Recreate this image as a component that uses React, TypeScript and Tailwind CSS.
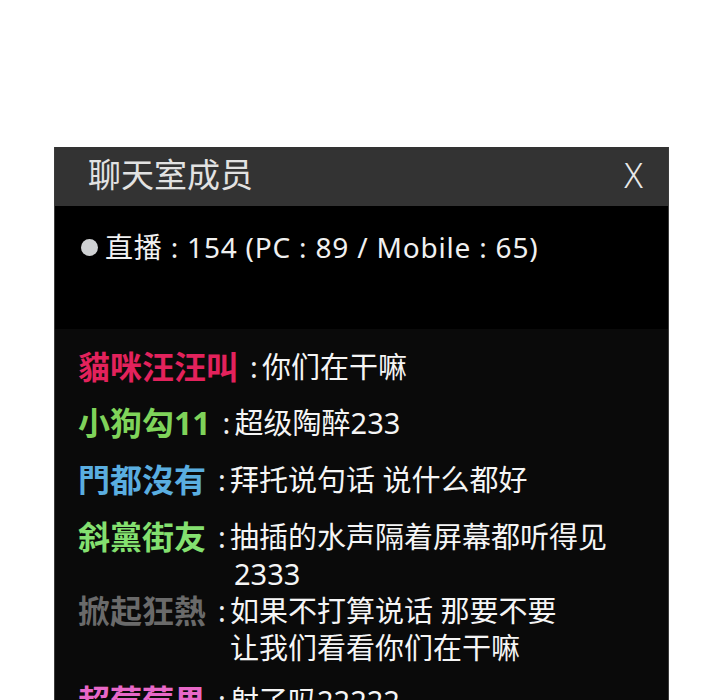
import { ReactNode } from 'react'

// 聊天室成员面板

interface ChatLine {
  name: string
  color: string
  gap: string
  text: ReactNode
}

const lines: ChatLine[] = [
  { name: '貓咪汪汪叫', color: 'text-[#e3225c]', gap: 'mb-[19px]', text: '你们在干嘛' },
  { name: '小狗勾11', color: 'text-[#7fd35a]', gap: 'mb-[20px]', text: '超级陶醉233' },
  { name: '門都沒有', color: 'text-[#5aaee0]', gap: 'mb-[20px]', text: '拜托说句话 说什么都好' },
  {
    name: '斜黨街友',
    color: 'text-[#84e070]',
    gap: 'mb-0',
    text: (
      <>
        抽插的水声隔着屏幕都听得见
        <br />
        <span className="pl-[4px]">2333</span>
      </>
    )
  },
  {
    name: '掀起狂熱',
    color: 'text-[#6a6a6a]',
    gap: 'mb-[16px]',
    text: (
      <>
        如果不打算说话 那要不要
        <br />
        让我们看看你们在干嘛
      </>
    )
  },
  { name: '超莓莓果', color: 'text-[#e868c8]', gap: 'mb-0', text: '射了吗22222' }
]

export default function App() {
  return (
    <div
      className="h-[700px] overflow-hidden bg-white pt-[147px]"
      style={{ fontFamily: '"Noto Sans", "Noto Sans CJK SC", sans-serif' }}
    >
      <div className="ml-[54px] w-[615px] h-[553px] border-x border-[#3c3c3c] bg-black overflow-hidden">
        {/* 标题栏 */}
        <div className="h-[59px] bg-[#333333] flex items-center justify-between pl-[33px] pr-[25px]">
          <span className="text-[33px] leading-none text-[#e2e2e2] -mt-[4px]">聊天室成员</span>
          <span className="text-[34px] leading-none font-light text-[#e8e8e8] -mt-[4px]">X</span>
        </div>

        {/* 在线人数 */}
        <div className="pt-[23px] pl-[26px] flex items-center h-[60px]">
          <span className="w-[17px] h-[17px] rounded-full bg-[#cfd1d3] mr-[7px]" />
          <span className="text-[28px] leading-[37px] tracking-[0.8px] text-[#f0f0f0] whitespace-nowrap">
            直播 : 154 (PC : 89 / Mobile : 65)
          </span>
        </div>

        {/* 聊天记录 */}
        <div className="mt-[63px] bg-[#0a0a0a] h-full pl-[23px] pt-[19px] flex flex-col">
          {lines.map((line) => (
            <div key={line.name} className={`flex items-start ${line.gap}`}>
              <span className={`text-[32px] leading-[37px] font-bold whitespace-nowrap ${line.color}`}>
                {line.name}
              </span>
              <span className="ml-[12px] w-[12px] text-[29px] leading-[37px] text-[#f0f0f0]">:</span>
              <span className="text-[29px] leading-[37px] text-[#f5f5f5] whitespace-nowrap">
                {line.text}
              </span>
            </div>
          ))}
        </div>
      </div>
    </div>
  )
}
